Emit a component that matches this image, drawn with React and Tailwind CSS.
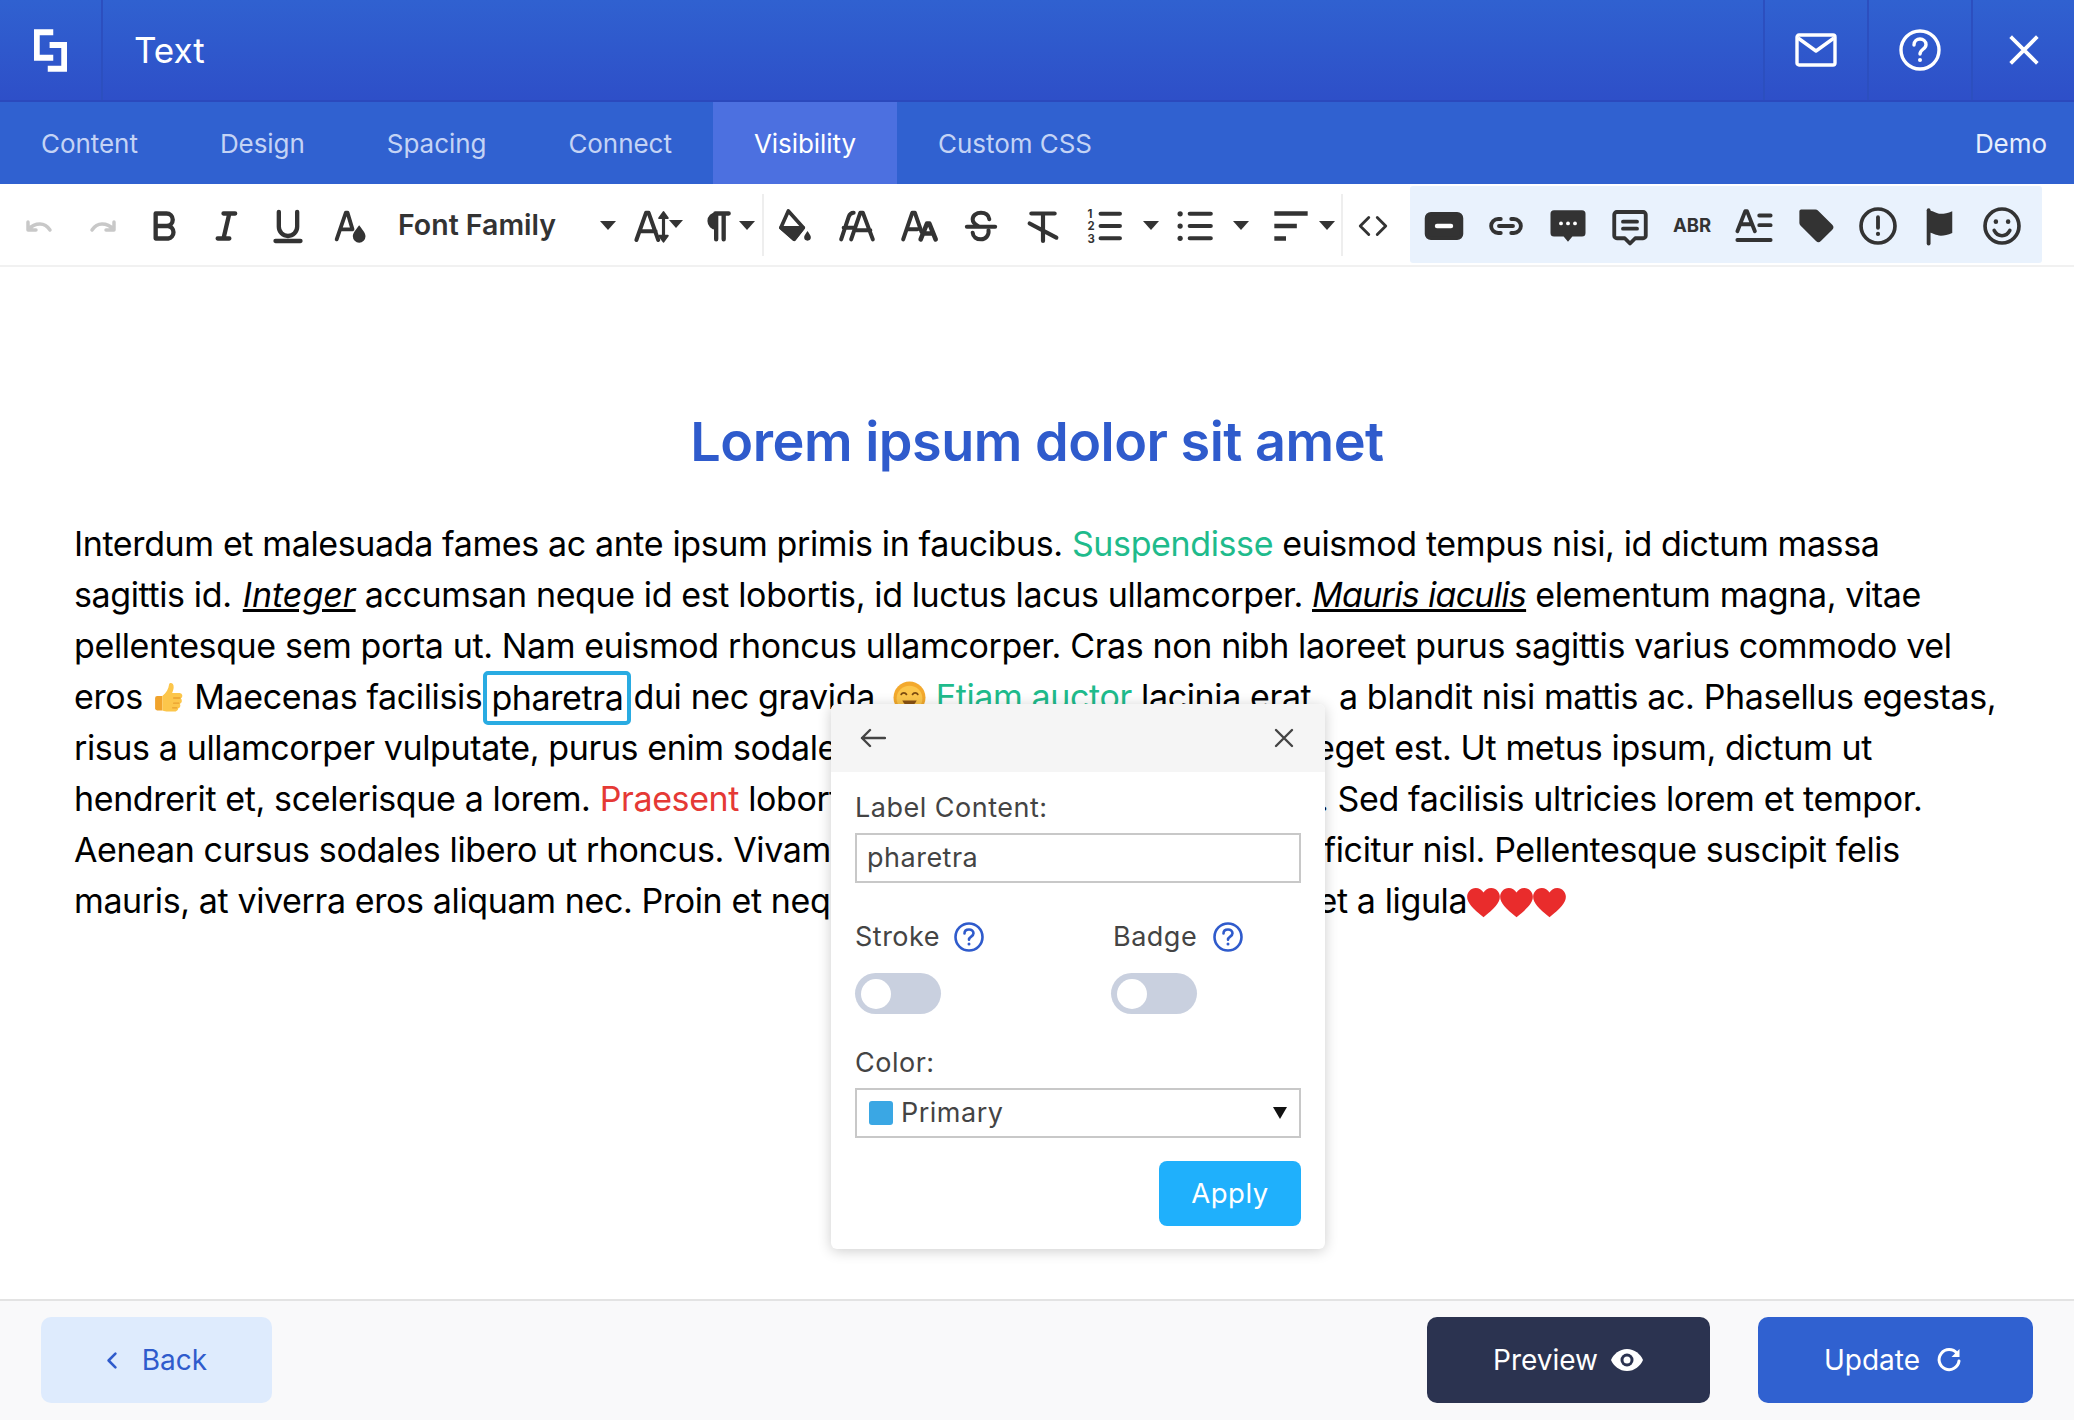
const INK = '#333333';

function Ico({ children, size = 40, className = '', vb = '0 0 24 24' }) {
  return (
    <svg viewBox={vb} width={size} height={size} fill="none" stroke={INK} strokeWidth="2" strokeLinecap="round" strokeLinejoin="round" className={className}>
      {children}
    </svg>
  );
}

function Caret() {
  return (
    <svg viewBox="0 0 16 9" width="16" height="9" className="shrink-0">
      <path d="M0 0h16L8 9z" fill={INK} />
    </svg>
  );
}

function Btn({ children }) {
  return <div className="w-[62px] h-full pt-[2px] flex items-center justify-center shrink-0">{children}</div>;
}

function Toolbar() {
  return (
    <div className="h-[83px] flex items-center pl-[9px] border-b-2 border-[#f1f1f1] bg-white shrink-0">
      <Btn>
        <Ico size={32}><path d="M3 9v6h6M3.500 14.500C6 11.500 9 10.500 12 10.500s5.500 1.500 7.500 4.500" stroke="#c8c8c8" strokeWidth="2.600" /></Ico>
      </Btn>
      <Btn>
        <Ico size={32}><path d="M21 9v6h-6M20.500 14.500C18 11.500 15 10.500 12 10.500s-5.500 1.500-7.500 4.500" stroke="#c8c8c8" strokeWidth="2.600" /></Ico>
      </Btn>
      <Btn>
        <Ico><path d="M7 4.500h6.500a3.700 3.700 0 0 1 0 7.500H7zM7 12h7.500a3.800 3.800 0 0 1 0 7.500H7z" strokeWidth="2.600" /></Ico>
      </Btn>
      <Btn>
        <Ico><path d="M10.500 4.500h7M14 4.500l-3.500 15M7 19.500h7" strokeWidth="2.600" /></Ico>
      </Btn>
      <Btn>
        <Ico><path d="M6.500 3.500v9a5.500 5.500 0 0 0 11 0v-9M4.500 21h15" strokeWidth="2.600" /></Ico>
      </Btn>
      <Btn>
        <Ico>
          <path d="M4 20 9.500 4h1l3 10M6.500 14h6" strokeWidth="2.300" />
          <path d="M17.500 11.500c2.300 3 3.800 4.800 3.800 6.700a3.800 3.800 0 0 1-7.600 0c0-1.900 1.500-3.700 3.800-6.700z" fill={INK} stroke="none" />
        </Ico>
      </Btn>

      <div className="w-[246px] h-full flex items-center justify-between pl-[17px] pr-[11px] pt-[2px] shrink-0">
        <span className="text-[28.5px] font-semibold text-[#333]">Font Family</span>
        <Caret />
      </div>

      <div className="w-[62px] h-full pt-[2px] flex items-center shrink-0 relative">
        <Ico size={42} className="ml-[5px]">
          <path d="M2.500 20 8 4.500h1.500L15 20M4.500 15h9" strokeWidth="2.300" />
          <path d="M18 6v13" strokeWidth="1.800" />
          <path d="M15.500 7.500 18 4l2.500 3.500zM15.500 17.500 18 21l2.500-3.500z" fill={INK} strokeWidth="1" />
        </Ico>
        <svg viewBox="0 0 14 8" width="14" height="8" className="absolute left-[42px] top-[36px]"><path d="M0 0h14L7 8z" fill={INK} /></svg>
      </div>

      <div className="w-[73px] h-full pt-[2px] flex items-center shrink-0">
        <Ico className="ml-[8px]">
          <path d="M11 4.500h8M11.500 4.500V20M16 4.500V20" strokeWidth="2.600" />
          <path d="M11.500 4.500a4.500 4.500 0 0 0 0 9z" fill={INK} strokeWidth="1.500" />
        </Ico>
        <span className="ml-[2px]"><Caret /></span>
      </div>
      <div className="w-[2px] h-[62px] bg-[#eeeeee] shrink-0" />

      <Btn>
        <Ico>
          <path d="M8 3l9 10-5.500 7L3.500 13z" strokeWidth="2.200" />
          <path d="M3.500 13h13.500l-5.500 7z" fill={INK} stroke={INK} />
          <path d="M19.500 15c1.200 1.800 2 2.800 2 3.800a2 2 0 0 1-4 0c0-1 .8-2 2-3.800z" fill={INK} stroke="none" />
        </Ico>
      </Btn>
      <Btn>
        <Ico>
          <path d="M2.500 20 7 6.500Q7.800 4 10 4M4 13h6" strokeWidth="2.400" />
          <path d="M8.500 20 14 4h1.500l6 16M11 14.500h9" strokeWidth="2.400" />
        </Ico>
      </Btn>
      <Btn>
        <Ico>
          <path d="M2.500 20 8 4h1.500l4 11.500M5 14h6" strokeWidth="2.400" />
          <path d="M13 20l3.800-9.500h1.400L22 20M14.800 16.500h5.400" strokeWidth="2.800" />
        </Ico>
      </Btn>
      <Btn>
        <Ico>
          <path d="M17 8c-.3-2.500-2.300-4-5-4-2.800 0-5 1.700-5 4 0 1.800 1.200 3 3.200 4M16.500 14.500c.5 3-1.700 5.500-4.500 5.500-2.800 0-4.800-1.500-5-4" strokeWidth="2.400" />
          <path d="M3.500 12.500h17" strokeWidth="2.400" />
        </Ico>
      </Btn>
      <Btn>
        <Ico>
          <path d="M5 4.500h14M12 4.500V21M4 10.500 20 19" strokeWidth="2.500" />
        </Ico>
      </Btn>

      <div className="w-[93px] h-full pt-[2px] flex items-center shrink-0">
        <div className="w-[62px] flex justify-center">
          <Ico size={42}>
            <path d="M9.500 5h11M9.500 12h11M9.500 19h11" strokeWidth="2.400" />
            <text x="2" y="7.500" fontSize="6.500" fontWeight="700" fill={INK} stroke="none" fontFamily="Inter, sans-serif">1</text>
            <text x="2" y="14.500" fontSize="6.500" fontWeight="700" fill={INK} stroke="none" fontFamily="Inter, sans-serif">2</text>
            <text x="2" y="21.500" fontSize="6.500" fontWeight="700" fill={INK} stroke="none" fontFamily="Inter, sans-serif">3</text>
          </Ico>
        </div>
        <div className="ml-[7px]"><Caret /></div>
      </div>
      <div className="w-[94px] h-full pt-[2px] flex items-center shrink-0">
        <div className="w-[55px] flex justify-center">
          <Ico size={42}>
            <path d="M9 5h12M9 12h12M9 19h12" strokeWidth="2.400" />
            <circle cx="3.500" cy="5" r="1.500" fill={INK} stroke="none" />
            <circle cx="3.500" cy="12" r="1.500" fill={INK} stroke="none" />
            <circle cx="3.500" cy="19" r="1.500" fill={INK} stroke="none" />
          </Ico>
        </div>
        <div className="ml-[11px]"><Caret /></div>
      </div>
      <div className="w-[76px] h-full pt-[2px] flex items-center shrink-0">
        <div className="w-[60px] flex justify-center">
          <Ico>
            <path d="M2 4.500h20M2 12h13.500M2 19.500h7" strokeLinecap="butt" strokeWidth="2.600" />
          </Ico>
        </div>
        <div className="ml-[-2px]"><Caret /></div>
      </div>
      <div className="w-[2px] h-[62px] bg-[#eeeeee] ml-[4px] shrink-0" />
      <div className="w-[60px] pt-[2px] flex justify-center shrink-0">
        <Ico size={34}><path d="M9 6l-6 6 6 6M15 6l6 6-6 6" strokeWidth="2" /></Ico>
      </div>

      <div className="ml-[7px] w-[632px] h-[77px] bg-[#e9f2fd] rounded-[3px] flex items-center pl-[3px] shrink-0">
        <Btn>
          <Ico size={42}>
            <rect x="2" y="5" width="20" height="14" rx="2.500" fill={INK} stroke={INK} />
            <path d="M8 12h8" stroke="#fff" strokeWidth="2.500" />
          </Ico>
        </Btn>
        <Btn>
          <Ico size={42}><path d="M9 8H7.500a4 4 0 0 0 0 8H9M15 8h1.500a4 4 0 0 1 0 8H15M8 12h8" strokeWidth="2.200" /></Ico>
        </Btn>
        <Btn>
          <Ico size={42}>
            <path d="M4 3h16a2 2 0 0 1 2 2v11a2 2 0 0 1-2 2h-5.500L12 21l-2.500-3H4a2 2 0 0 1-2-2V5a2 2 0 0 1 2-2z" fill={INK} stroke="none" />
            <circle cx="8" cy="10.500" r="1.100" fill="#fff" stroke="none" />
            <circle cx="12" cy="10.500" r="1.100" fill="#fff" stroke="none" />
            <circle cx="16" cy="10.500" r="1.100" fill="#fff" stroke="none" />
          </Ico>
        </Btn>
        <Btn>
          <Ico size={42}>
            <path d="M4.500 4h15A1.500 1.500 0 0 1 21 5.500v12a1.500 1.500 0 0 1-1.500 1.500H15l-3 3-3-3H4.500A1.500 1.500 0 0 1 3 17.500v-12A1.500 1.500 0 0 1 4.500 4z" strokeWidth="2.200" />
            <path d="M8 9.500h8M8 13.500h8" strokeWidth="2.200" />
          </Ico>
        </Btn>
        <Btn>
          <span className="text-[18.5px] font-bold text-[#333]">ABR</span>
        </Btn>
        <Btn>
          <Ico size={42}>
            <path d="M2.500 15 7 3.500h1L12.500 15M4.500 11h6" strokeWidth="2.200" />
            <path d="M15 6h6.500M15 11.500h6.500M2.500 20h19" strokeWidth="2.200" />
          </Ico>
        </Btn>
        <Btn>
          <Ico size={42}>
            <path d="M2.500 3.500A1 1 0 0 1 3.500 2.500h8.200a2 2 0 0 1 1.400.6l8.200 8.200a2 2 0 0 1 0 2.800l-6.500 6.500a2 2 0 0 1-2.800 0L3.100 11.700a2 2 0 0 1-.6-1.400z" fill={INK} stroke="none" />
          </Ico>
        </Btn>
        <Btn>
          <Ico size={42}>
            <circle cx="12" cy="12" r="9.700" strokeWidth="2.100" />
            <path d="M12 7v6" strokeWidth="2.200" />
            <circle cx="12" cy="16.500" r="1.200" fill={INK} stroke="none" />
          </Ico>
        </Btn>
        <Btn>
          <Ico size={42}>
            <path d="M5.500 3v19" strokeWidth="2.200" />
            <path d="M5 3.500c3-1 4 1.500 7.500 1.500 2 0 4-.5 6.500-1.500v12.500c-2.500 1-4.500 1.500-6.500 1.500-3.500 0-4.500-2-7.500-1.500z" fill={INK} stroke="none" />
          </Ico>
        </Btn>
        <Btn>
          <Ico size={42}>
            <circle cx="12" cy="12" r="9.700" strokeWidth="2.100" />
            <circle cx="8.500" cy="9.500" r="1.300" fill={INK} stroke="none" />
            <circle cx="15.500" cy="9.500" r="1.300" fill={INK} stroke="none" />
            <path d="M7.500 14.500c1 2 2.700 3 4.500 3s3.500-1 4.500-3" strokeWidth="2" />
          </Ico>
        </Btn>
      </div>
    </div>
  );
}

function Heart() {
  return (
    <svg viewBox="0 0 24 22" width="33" height="30" className="inline-block align-[-5px]">
      <path d="M12 21.500C4 15 0 11 0 6.500 0 3 2.700 0 6.300 0 8.700 0 10.800 1.300 12 3.300 13.200 1.300 15.300 0 17.700 0 21.300 0 24 3 24 6.500 24 11 20 15 12 21.500z" fill="#e92c2c" />
    </svg>
  );
}

function Thumb() {
  return (
    <svg viewBox="0 0 32 32" width="33" height="34" className="inline-block align-[-5px]">
      <path d="M5 15h5v14H5a2 2 0 0 1-2-2V17a2 2 0 0 1 2-2z" fill="#f0a32c" />
      <path d="M10 15c4-3 6-7 6.500-11 .3-2.500 5-2 4.500 3-.2 2-1 4-1.500 5H27a3 3 0 0 1 1 5.500 3 3 0 0 1-1 5 3 3 0 0 1-1.500 4.500A3 3 0 0 1 23 30H14c-2 0-3-1-4-1z" fill="#fcc64b" />
      <path d="M21 17h6M21 22h5M20 26.500h4" stroke="#e9a02f" strokeWidth="1.300" strokeLinecap="round" />
    </svg>
  );
}

function Smile() {
  return (
    <svg viewBox="0 0 32 32" width="33" height="33" className="inline-block align-[-5px]">
      <circle cx="16" cy="16" r="15.500" fill="#f3a92d" />
      <circle cx="16" cy="17" r="12.500" fill="#fcc64b" />
      <path d="M8 13c1-2 4-2 5 0M19 13c1-2 4-2 5 0" stroke="#7a4a10" strokeWidth="1.800" fill="none" strokeLinecap="round" />
      <path d="M9 19c2 4 4.500 5.500 7 5.500s5-1.500 7-5.500z" fill="#8a5212" />
    </svg>
  );
}

// text behind the dialog is clipped to a fixed width so the right half of the line stays put
function Hidden({ w, children }) {
  return <span className={`inline-block ${w} overflow-hidden whitespace-nowrap align-top`}>{children}</span>;
}

function Help() {
  return (
    <svg viewBox="0 0 30 30" width="30" height="30" fill="none" stroke="#2f5bcc" strokeWidth="2.600" strokeLinecap="round">
      <circle cx="15" cy="15" r="13.500" />
      <path d="M10.500 11.500c0-2.600 2-4 4.500-4s4.500 1.500 4.500 3.800c0 3.500-4.500 3.200-4.500 6.500" />
      <circle cx="15" cy="22" r="1.500" fill="#2f5bcc" stroke="none" />
    </svg>
  );
}

function Toggle() {
  return (
    <div className="mt-[20px] w-[86px] h-[41px] rounded-full bg-[#c9d0df] flex items-center pl-[6px]">
      <span className="w-[30px] h-[30px] rounded-full bg-white" />
    </div>
  );
}

function Dialog() {
  return (
    <div className="absolute left-[831px] top-[704px] w-[494px] h-[545px] bg-white rounded-[6px] shadow-[0_2px_14px_rgba(0,0,0,0.2)] overflow-hidden text-[#444] text-[27px] tracking-[0.5px]">
      <div className="h-[68px] bg-[#f5f5f5] flex items-center justify-between pl-[29px] pr-[31px]">
        <svg viewBox="0 0 26 20" width="26" height="20" fill="none" stroke="#444" strokeWidth="2.400" strokeLinecap="round" strokeLinejoin="round"><path d="M25 10H2M10 2l-8 8 8 8" /></svg>
        <svg viewBox="0 0 20 20" width="20" height="20" fill="none" stroke="#444" strokeWidth="2.400" strokeLinecap="round"><path d="M2 2l16 16M18 2 2 18" /></svg>
      </div>
      <div className="px-[24px]">
        <div className="mt-[20px] h-[32px] leading-[32px]">Label Content:</div>
        <div className="mt-[9px] h-[50px] border-2 border-[#c8c8c8] px-[10px] flex items-center">pharetra</div>
        <div className="mt-[38px] flex">
          <div className="w-[256px]">
            <div className="flex items-center gap-[14px] h-[32px] leading-[32px]">
              Stroke
              <Help />
            </div>
            <Toggle />
          </div>
          <div>
            <div className="flex items-center gap-[16px] h-[32px] leading-[32px] pl-[2px]">
              Badge
              <Help />
            </div>
            <Toggle />
          </div>
        </div>
        <div className="mt-[33px] h-[32px] leading-[32px]">Color:</div>
        <div className="mt-[9px] h-[50px] border-2 border-[#c8c8c8] pl-[12px] pr-[12px] flex items-center">
          <span className="w-[24px] h-[24px] bg-[#3aa7e4] rounded-[3px] mr-[8px]" />
          <span>Primary</span>
          <span className="ml-auto">
            <svg viewBox="0 0 14 12" width="14" height="12"><path d="M0 0h14L7 12z" fill="#111" /></svg>
          </span>
        </div>
        <div className="mt-[23px] flex justify-end">
          <button className="w-[142px] h-[65px] rounded-[8px] bg-[#1fb0fc] text-white text-[27.5px]">Apply</button>
        </div>
      </div>
    </div>
  );
}

export default function App() {
  const tabs = ['Content', 'Design', 'Spacing', 'Connect', 'Visibility', 'Custom CSS'];
  return (
    <div className="relative h-[1420px] w-[2074px] overflow-hidden flex flex-col bg-white font-['Inter',sans-serif]">
      <header className="h-[102px] shrink-0 flex items-stretch bg-gradient-to-b from-[#3061d0] to-[#2e4fc8] border-b-2 border-[#2b49bd]">
        <div className="w-[103px] flex items-center justify-center border-r-2 border-[#2c4fbf]">
          <svg viewBox="0 0 36 46" width="33" height="43" fill="none" stroke="#fff" strokeWidth="6.500">
            <path d="M21 3H3v28h18" strokeLinecap="butt" />
            <path d="M17 17h16v26H15" strokeLinecap="butt" />
          </svg>
        </div>
        <div className="flex-1 flex items-center pl-[31px] text-[35px] text-white">Text</div>
        <div className="w-[104px] flex items-center justify-center border-l-2 border-[#2c4fbf]">
          <svg viewBox="0 0 42 34" width="42" height="34" fill="none" stroke="#fff" strokeWidth="3.400" strokeLinejoin="round"><rect x="2" y="2" width="38" height="30" rx="2" /><path d="M3 5l18 13L39 5" /></svg>
        </div>
        <div className="w-[104px] flex items-center justify-center border-l-2 border-[#2c4fbf]">
          <svg viewBox="0 0 42 42" width="42" height="42" fill="none" stroke="#fff" strokeWidth="3.400" strokeLinecap="round"><circle cx="21" cy="21" r="19" /><path d="M15 16c0-4 3-6 6-6s6 2 6 5.500c0 5-6 4.500-6 9.500" /><circle cx="21" cy="31" r="2" fill="#fff" stroke="none" /></svg>
        </div>
        <div className="w-[103px] flex items-center justify-center border-l-2 border-[#2c4fbf]">
          <svg viewBox="0 0 30 30" width="30" height="30" fill="none" stroke="#fff" strokeWidth="3.800" strokeLinecap="square"><path d="M3 3l24 24M27 3 3 27" /></svg>
        </div>
      </header>

      <nav className="h-[82px] shrink-0 flex items-stretch bg-[#3061d0] text-[26px] tracking-[-0.05px] text-[#c4d3f5]">
        {tabs.map((t) => (
          <div key={t} className={t === 'Visibility' ? 'px-[41px] flex items-center bg-[#4c70e0] text-white' : 'px-[41px] flex items-center'}>
            {t}
          </div>
        ))}
        <div className="ml-auto pr-[27px] flex items-center text-[#e8eefc]">Demo</div>
      </nav>

      <Toolbar />

      <main className="flex-1 px-[74px] pt-[136px] text-black">
        <h1 className="text-center text-[54px] leading-[78px] font-semibold tracking-[-0.5px] text-[#2f5bcc]">Lorem ipsum dolor sit amet</h1>
        <p className="mt-[37px] text-[34px] leading-[51px] tracking-[-0.38px] whitespace-nowrap">
          Interdum et malesuada fames ac ante ipsum primis in faucibus. <span className="text-[#1fbb8c]">Suspendisse</span> euismod tempus nisi, id dictum massa<br />
          sagittis id. <span className="italic underline ml-[2px] tracking-[0px]">Integer</span> accumsan neque id est lobortis, id luctus lacus ullamcorper. <span className="italic underline tracking-[-0.7px]">Mauris iaculis</span> elementum magna, vitae<br />
          pellentesque sem porta ut. Nam euismod rhoncus ullamcorper. Cras non nibh laoreet purus sagittis varius commodo vel<br />
          eros <Thumb /> Maecenas facilisis<span className="inline-block ml-[1px] mr-[2px] px-[4px] h-[54px] leading-[46px] mb-[-3px] border-[4px] border-[#29abe2] rounded-[5px] align-top">pharetra</span>dui nec gravida. <Smile /> <span className="text-[#1fbb8c]">Etiam auctor</span> lacinia erat, <span className="ml-[9px]">a blandit nisi mattis ac. Phasellus egestas,</span><br />
          risus a ullamcorper vulputate, purus enim sodale<Hidden w="w-[478px]">s nulla, vel fermentum lectus sapien non</Hidden>eget est. Ut metus ipsum, dictum ut<br />
          hendrerit et, scelerisque a lorem. <span className="text-[#e53935]">Praesent</span> lobor<Hidden w="w-[490px]">tis dolor a sapien blandit, non pretium</Hidden>. Sed facilisis ultricies lorem et tempor.<br />
          Aenean cursus sodales libero ut rhoncus. Vivamu<Hidden w="w-[473px]">s tincidunt orci vitae sapien aliquet</Hidden>ficitur nisl. Pellentesque suscipit felis<br />
          mauris, at viverra eros aliquam nec. Proin et neq<Hidden w="w-[487px]">ue vel lacus malesuada tempus sed</Hidden>et a ligula<Heart /><Heart /><Heart />
        </p>
      </main>

      <footer className="h-[121px] shrink-0 border-t-2 border-[#e3e3e3] bg-[#f9f9fa] flex items-center px-[41px] pb-[2px] text-[28px]">
        <button className="w-[231px] h-[86px] pt-[1px] rounded-[10px] bg-[#deebfd] text-[#2f5bcc] flex items-center justify-center gap-[24px]">
          <svg viewBox="0 0 14 22" width="12" height="19" fill="none" stroke="#2f5bcc" strokeWidth="3" strokeLinecap="round" strokeLinejoin="round"><path d="M11 3 3 11l8 8" /></svg>
          Back
        </button>
        <button className="ml-auto w-[283px] h-[86px] pt-[1px] rounded-[10px] bg-[#2b3350] text-white flex items-center justify-center gap-[12px]">
          Preview
          <svg viewBox="0 0 34 24" width="34" height="24">
            <path d="M17 1C9.500 1 3.500 6 1 12c2.500 6 8.500 11 16 11s13.500-5 16-11C30.500 6 24.500 1 17 1z" fill="#fff" />
            <circle cx="17" cy="12" r="6.500" fill="#2b3350" />
            <circle cx="17" cy="12" r="3.500" fill="#fff" />
          </svg>
        </button>
        <button className="ml-[48px] w-[275px] h-[86px] pt-[1px] pr-[5px] rounded-[10px] bg-[#3061d0] text-white flex items-center justify-center gap-[16px]">
          Update
          <svg viewBox="0 0 26 26" width="26" height="26" fill="none" stroke="#fff" strokeWidth="3" strokeLinecap="round">
            <path d="M21 6.500A10 10 0 1 0 23 14" />
            <path d="M23.500 2v8h-8z" fill="#fff" stroke="none" />
          </svg>
        </button>
      </footer>

      <Dialog />
    </div>
  );
}
